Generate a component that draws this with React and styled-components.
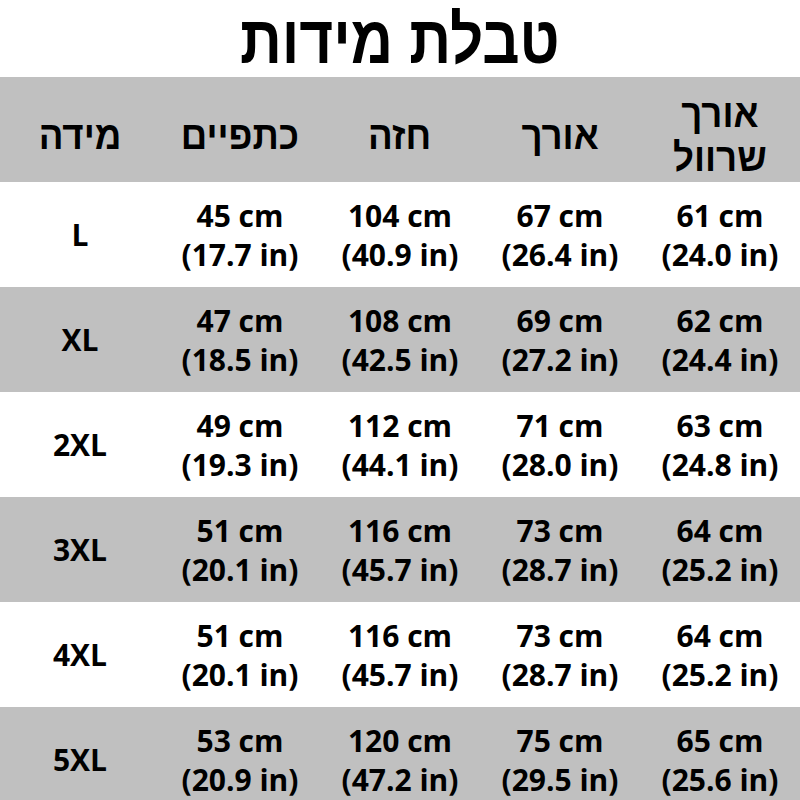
import React from "react";
import styled, { createGlobalStyle } from "styled-components";

const GlobalStyle = createGlobalStyle`
  html, body {
    margin: 0;
    padding: 0;
    background: #ffffff;
  }
`;

const Page = styled.div`
  width: 800px;
  height: 800px;
  overflow: hidden;
  background: #ffffff;
  display: flex;
  flex-direction: column;
`;

const Title = styled.h1`
  margin: 0;
  flex-shrink: 0;
  height: 77px;
  display: flex;
  align-items: center;
  justify-content: center;
  font-family: "Liberation Sans", Arial, sans-serif;
  font-weight: 700;
  font-size: 67px;
  color: #000;
  direction: rtl;

  span {
    display: inline-block;
    transform: scaleX(0.87);
    padding-top: 2px;
  }
`;

const Table = styled.div`
  display: flex;
  flex-direction: column;
  flex-shrink: 0;
  width: 800px;
`;

const Row = styled.div`
  display: grid;
  grid-template-columns: repeat(5, 160px);
  height: 105px;
  flex-shrink: 0;
  background: ${(p) => (p.$shaded ? "#c0c0c0" : "#ffffff")};
`;

const HeadCell = styled.div`
  display: flex;
  align-items: center;
  justify-content: center;
  text-align: center;
  direction: rtl;
  font-family: "Liberation Sans", Arial, sans-serif;
  font-weight: 700;
  font-size: 39px;
  line-height: 44px;
  color: #000;
  padding-top: 12px;

  span {
    display: inline-block;
    transform: scaleX(0.94);
  }
`;

const Cell = styled.div`
  display: flex;
  flex-direction: column;
  align-items: center;
  justify-content: center;
  font-family: "Open Sans", "DejaVu Sans", sans-serif;
  font-weight: 700;
  font-size: 30px;
  line-height: 39px;
  color: #000;
`;

const headers = [["מידה"], ["כתפיים"], ["חזה"], ["אורך"], ["אורך", "שרוול"]];

const rows = [
  ["L", ["45 cm", "(17.7 in)"], ["104 cm", "(40.9 in)"], ["67 cm", "(26.4 in)"], ["61 cm", "(24.0 in)"]],
  ["XL", ["47 cm", "(18.5 in)"], ["108 cm", "(42.5 in)"], ["69 cm", "(27.2 in)"], ["62 cm", "(24.4 in)"]],
  ["2XL", ["49 cm", "(19.3 in)"], ["112 cm", "(44.1 in)"], ["71 cm", "(28.0 in)"], ["63 cm", "(24.8 in)"]],
  ["3XL", ["51 cm", "(20.1 in)"], ["116 cm", "(45.7 in)"], ["73 cm", "(28.7 in)"], ["64 cm", "(25.2 in)"]],
  ["4XL", ["51 cm", "(20.1 in)"], ["116 cm", "(45.7 in)"], ["73 cm", "(28.7 in)"], ["64 cm", "(25.2 in)"]],
  ["5XL", ["53 cm", "(20.9 in)"], ["120 cm", "(47.2 in)"], ["75 cm", "(29.5 in)"], ["65 cm", "(25.6 in)"]],
];

const App = () => {
  return (
    <Page>
      <GlobalStyle />
      <Title>
        <span>טבלת מידות</span>
      </Title>
      <Table>
        <Row $shaded>
          {headers.map((lines, k) => (
            <HeadCell key={k}>
              <span>
                {lines.map((l, n) => (
                  <React.Fragment key={n}>
                    {n > 0 && <br />}
                    {l}
                  </React.Fragment>
                ))}
              </span>
            </HeadCell>
          ))}
        </Row>
        {rows.map((r, i) => (
          <Row key={r[0]} $shaded={i % 2 === 1}>
            <Cell>{r[0]}</Cell>
            {r.slice(1).map((v, j) => (
              <Cell key={j}>
                <span>{v[0]}</span>
                <span>{v[1]}</span>
              </Cell>
            ))}
          </Row>
        ))}
      </Table>
    </Page>
  );
};

export default App;
